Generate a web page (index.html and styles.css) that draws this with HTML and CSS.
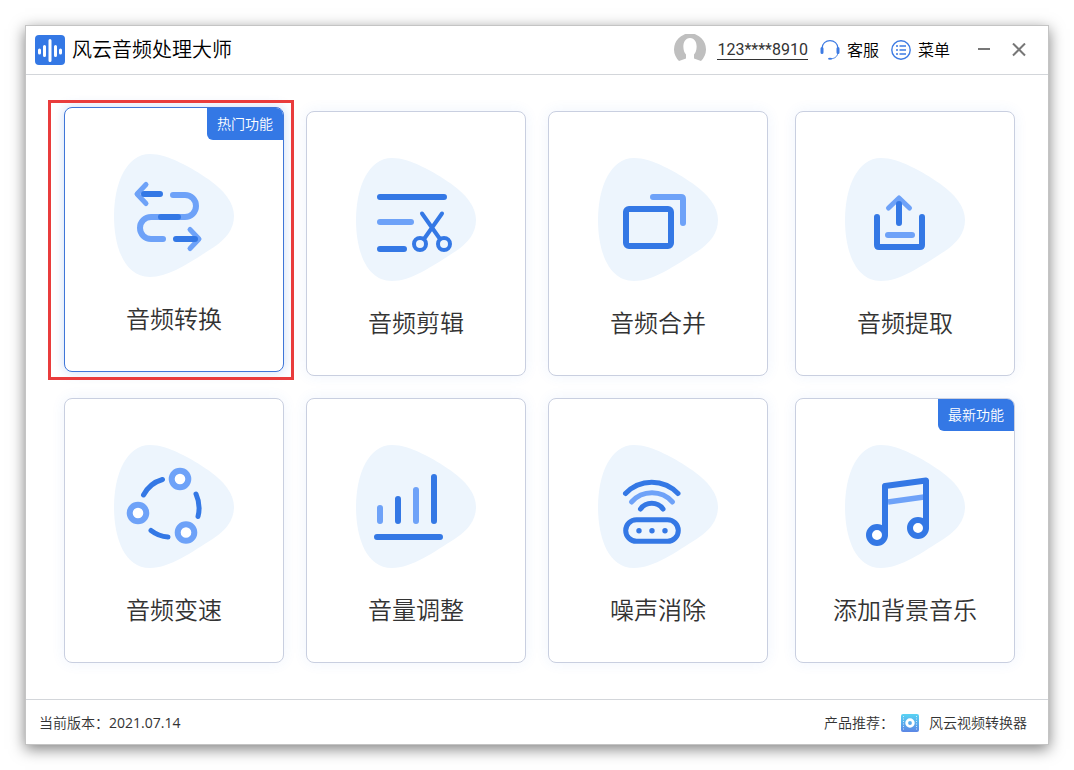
FILE: index.html
```
<!DOCTYPE html>
<html lang="zh-CN">
<head>
  <meta charset="UTF-8">
  <meta name="viewport" content="width=device-width, initial-scale=1.0">
  <title>风云音频处理大师</title>
  <link rel="stylesheet" href="styles.css">
</head>
<body>
  <svg class="defs" width="0" height="0" aria-hidden="true">
    <symbol id="blob" viewBox="0 0 120 124">
      <path d="M36 0C54 0 78 14 94 25C111 37 120 49 120 62C120 75 112 85 100 93C78 107 56 123 36 123C10 123 0 92 0 62C0 30 12 0 36 0Z" fill="#edf5fd"/>
    </symbol>
  </svg>
  <div class="window">
    <header class="titlebar">
      <svg class="logo" viewBox="0 0 30 30">
        <rect width="30" height="30" rx="4" fill="#3478e5"/>
        <path d="M4.5 15v3M9.5 11.500v9M15 5.500v20M20.500 11.500v9M25.500 15v3" stroke="#fff" stroke-width="3" stroke-linecap="round"/>
      </svg>
      <h1>风云音频处理大师</h1>
      <div class="tools">
        <a class="account" href="#">
          <svg class="avatar" viewBox="0 0 32 32">
            <path d="M5 27A16 16 0 1 1 27 27L20 24.500V20.500C24 17 24 4 16 4S8 17 12 20.500V24.500Z" fill="#bfbfbf"/>
          </svg>
          <span>123****8910</span>
        </a>
        <button class="tool" type="button">
          <svg viewBox="0 0 20 20" fill="none" stroke="#3d7be3">
            <path d="M2 8.500C2 -2 18 -2 18 8.500" stroke-width="1.200"/>
            <path d="M2 8.500v4M18 8.500v4" stroke-width="3" stroke-linecap="round"/>
            <path d="M18 13C17 17 14.500 18.500 11 18.800" stroke-width="1"/>
            <ellipse cx="10" cy="18.700" rx="2" ry="1" fill="#3d7be3" stroke="none"/>
          </svg>
          客服
        </button>
        <button class="tool" type="button">
          <svg viewBox="0 0 20 20" fill="none" stroke="#3d7be3" stroke-width="1.400">
            <circle cx="10" cy="10" r="9.200"/>
            <path d="M5 6h2M5 10h2M5 14h2M8.500 6h6.500M8.500 10h6.500M8.500 14h6.500" stroke-width="1.600"/>
          </svg>
          菜单
        </button>
        <button class="control" type="button" aria-label="最小化">
          <svg viewBox="0 0 14 14"><path d="M1 6h12"/></svg>
        </button>
        <button class="control" type="button" aria-label="关闭">
          <svg viewBox="0 0 14 14"><path d="M1 .5l12 12M13 .5L1 12.500"/></svg>
        </button>
      </div>
    </header>

    <main class="grid">
      <button class="card active" type="button">
        <span class="badge">热门功能</span>
        <svg class="icon" viewBox="0 0 120 124">
          <use href="#blob"/>
          <path class="light mid" d="M32 30.500L23 40L32 49.500M76 75.500L85 85L76 94.500"/>
          <path class="light" d="M59 41H71A11 11 0 0 1 71 63H37A11 11 0 0 0 37 85H49"/>
          <path class="dark" d="M30 40H46M47 63H64M62 85H81"/>
        </svg>
        <span class="name">音频转换</span>
      </button>
      <button class="card" type="button">
        <svg class="icon" viewBox="0 0 120 124">
          <use href="#blob"/>
          <path class="dark" d="M24 39H88M24 91H48"/>
          <path class="light" d="M24 64H55"/>
          <g class="dark thin">
            <path d="M66 55.500L84 81M86 55.500L68 81"/>
            <circle cx="64" cy="86" r="6"/>
            <circle cx="88" cy="86" r="6"/>
          </g>
        </svg>
        <span class="name">音频剪辑</span>
      </button>
      <button class="card" type="button">
        <svg class="icon" viewBox="0 0 120 124">
          <use href="#blob"/>
          <rect class="dark" x="28" y="51" width="45" height="37" rx="3"/>
          <path class="light" d="M55 39H83Q85 39 85 41V65"/>
        </svg>
        <span class="name">音频合并</span>
      </button>
      <button class="card" type="button">
        <svg class="icon" viewBox="0 0 120 124">
          <use href="#blob"/>
          <path class="light mid" d="M43.500 50L54 40L64.500 50"/>
          <path class="light" d="M43 77H67"/>
          <path class="dark" d="M54 46V65M32 59V87Q32 89 34 89H75Q77 89 77 87V59"/>
        </svg>
        <span class="name">音频提取</span>
      </button>
      <button class="card" type="button">
        <svg class="icon" viewBox="0 0 120 124">
          <use href="#blob"/>
          <g class="light hole">
            <circle cx="66" cy="34" r="8.300"/>
            <circle cx="24" cy="68" r="8.300"/>
            <circle cx="72" cy="87.500" r="8.300"/>
          </g>
          <path class="dark mid" d="M29.500 50A31 31 0 0 1 48.500 34.500M82 49A34 34 0 0 1 84 71.500M37 85.500A31 31 0 0 0 54 92"/>
        </svg>
        <span class="name">音频变速</span>
      </button>
      <button class="card" type="button">
        <svg class="icon" viewBox="0 0 120 124">
          <use href="#blob"/>
          <path class="light" d="M24 63V76M60 45V76"/>
          <path class="dark" d="M42 54V76M78 32V76M21 92H84"/>
        </svg>
        <span class="name">音量调整</span>
      </button>
      <button class="card" type="button">
        <svg class="icon" viewBox="0 0 120 124">
          <use href="#blob"/>
          <path class="light mid" d="M33.500 57A27.500 27.500 0 0 1 74.500 57"/>
          <g class="dark mid">
            <path d="M27.500 48.500A36 36 0 0 1 80 48.500M42.500 64A14 14 0 0 1 65 64"/>
            <rect x="27.700" y="74.700" width="52.600" height="21.600" rx="10.800"/>
          </g>
          <g fill="#3478e5">
            <circle cx="41" cy="85.700" r="2.700"/>
            <circle cx="54" cy="85.700" r="2.700"/>
            <circle cx="67" cy="85.700" r="2.700"/>
          </g>
        </svg>
        <span class="name">噪声消除</span>
      </button>
      <button class="card" type="button">
        <span class="badge">最新功能</span>
        <svg class="icon" viewBox="0 0 120 124">
          <use href="#blob"/>
          <path d="M43 57L79 52" stroke="#6ea2f8" stroke-width="5.500"/>
          <g class="dark hole">
            <circle cx="32" cy="90" r="8"/>
            <circle cx="73" cy="83" r="8"/>
          </g>
          <path class="dark" d="M40 89V41L81 35.500V82"/>
        </svg>
        <span class="name">添加背景音乐</span>
      </button>
    </main>

    <footer class="statusbar">
      <span>当前版本：<span class="version">2021.07.14</span></span>
      <div class="recommend">
        <span>产品推荐：</span>
        <a href="#">
          <svg viewBox="0 0 18 18">
            <defs>
              <linearGradient id="film" x1="0" y1="0" x2="0" y2="1">
                <stop offset="0" stop-color="#58d3f3"/>
                <stop offset="1" stop-color="#5b86e5"/>
              </linearGradient>
            </defs>
            <rect width="18" height="18" rx="2" fill="url(#film)"/>
            <path d="M2.500 2v14M15.500 2v14" stroke="#fff" stroke-opacity=".7" stroke-dasharray="1 1.500"/>
            <circle cx="9" cy="9" r="3.300" fill="none" stroke="#fff" stroke-width="2.800"/>
          </svg>
          风云视频转换器
        </a>
      </div>
    </footer>
  </div>
</body>
</html>
```
FILE: styles.css
```
* {
  box-sizing: border-box;
}
body {
  margin: 0;
  padding: 25px;
  background-color: #fff;
  color: #333;
  font-family: 'Open Sans', 'Noto Sans CJK SC', sans-serif;
  font-size: 14px;
}
button {
  padding: 0;
  border: none;
  background: none;
  color: inherit;
  font: inherit;
  cursor: pointer;
}
a {
  color: inherit;
  text-decoration: none;
}
svg {
  display: block;
  flex: none;
}
.defs {
  position: absolute;
}
.window {
  border: 1px solid #c4c4c4;
  background-color: #fff;
  box-shadow: 0 4px 14px rgba(0, 0, 0, 0.5);
}

/* title bar */
.titlebar {
  display: flex;
  align-items: center;
  height: 49px;
  padding: 0 22px 0 9px;
  border-bottom: 1px solid #d3d6da;
  color: #000;
}
.logo {
  width: 30px;
  height: 30px;
}
.titlebar h1 {
  margin: 0 0 0 7px;
  font-size: 20px;
  font-weight: 350;
  line-height: 30px;
}
.tools {
  display: flex;
  align-items: center;
  margin-left: auto;
  font-size: 16px;
  font-weight: 350;
  line-height: 24px;
}
.account {
  display: flex;
  align-items: center;
  gap: 11px;
  margin-right: 12px;
  color: #333;
  font-family: Roboto, sans-serif;
  font-weight: 400;
}
.account span {
  border-bottom: 1px solid #333;
  line-height: 18px;
}
.avatar {
  width: 32px;
  height: 32px;
}
.tool {
  display: flex;
  align-items: center;
  gap: 7px;
  margin-right: 12px;
}
.tool svg {
  width: 20px;
  height: 20px;
}
.control {
  margin-left: 15px;
}
.control + .control {
  margin-left: 21px;
}
.control svg {
  width: 14px;
  height: 14px;
  stroke: #777;
  stroke-width: 2;
}

/* feature cards */
.grid {
  display: grid;
  grid-template-columns: 44fr 44fr 44fr 45fr;
  gap: 22px;
  padding: 36px 33px 36px 38px;
}
.card {
  position: relative;
  display: flex;
  flex-direction: column;
  align-items: center;
  gap: 25px;
  padding: 46px 0 36px;
  border: 1px solid #c9cfe0;
  border-radius: 8px;
  background-color: #fff;
  box-shadow: 0 0 14px rgba(52, 120, 229, 0.08);
}
.card:nth-child(4n) {
  margin-left: 5px;
}
.card.active {
  border-color: #3f76d8;
  box-shadow: 0 0 12px rgba(52, 120, 229, 0.25);
  transform: translateY(-4px);
}
.card.active::after {
  content: '';
  position: absolute;
  top: -8px;
  right: -11px;
  bottom: -9px;
  left: -17px;
  border: 3px solid #e93c3c;
}
.badge {
  position: absolute;
  top: 0;
  right: 0;
  padding: 0 10px;
  border-radius: 0 7px 0 6px;
  background-color: #3478e5;
  color: #fff;
  font-size: 14px;
  font-weight: 350;
  line-height: 32px;
}
.icon {
  width: 120px;
  height: 124px;
}
.name {
  font-size: 24px;
  font-weight: 350;
  line-height: 32px;
}
.dark,
.light {
  fill: none;
  stroke: #3478e5;
  stroke-width: 6;
  stroke-linecap: round;
  stroke-linejoin: round;
}
.light {
  stroke: #6ea2f8;
}
.thin {
  stroke-width: 4;
}
.mid {
  stroke-width: 5;
}
.hole {
  fill: #fff;
}

/* status bar */
.statusbar {
  display: flex;
  align-items: center;
  justify-content: space-between;
  height: 45px;
  padding: 2px 21px 0 13px;
  border-top: 1px solid #d3d6da;
  font-weight: 350;
  line-height: 20px;
}
.version {
  font-weight: 400;
}
.recommend,
.recommend a {
  display: flex;
  align-items: center;
}
.recommend {
  gap: 7px;
}
.recommend a {
  gap: 10px;
}
.recommend svg {
  width: 18px;
  height: 18px;
}
```
